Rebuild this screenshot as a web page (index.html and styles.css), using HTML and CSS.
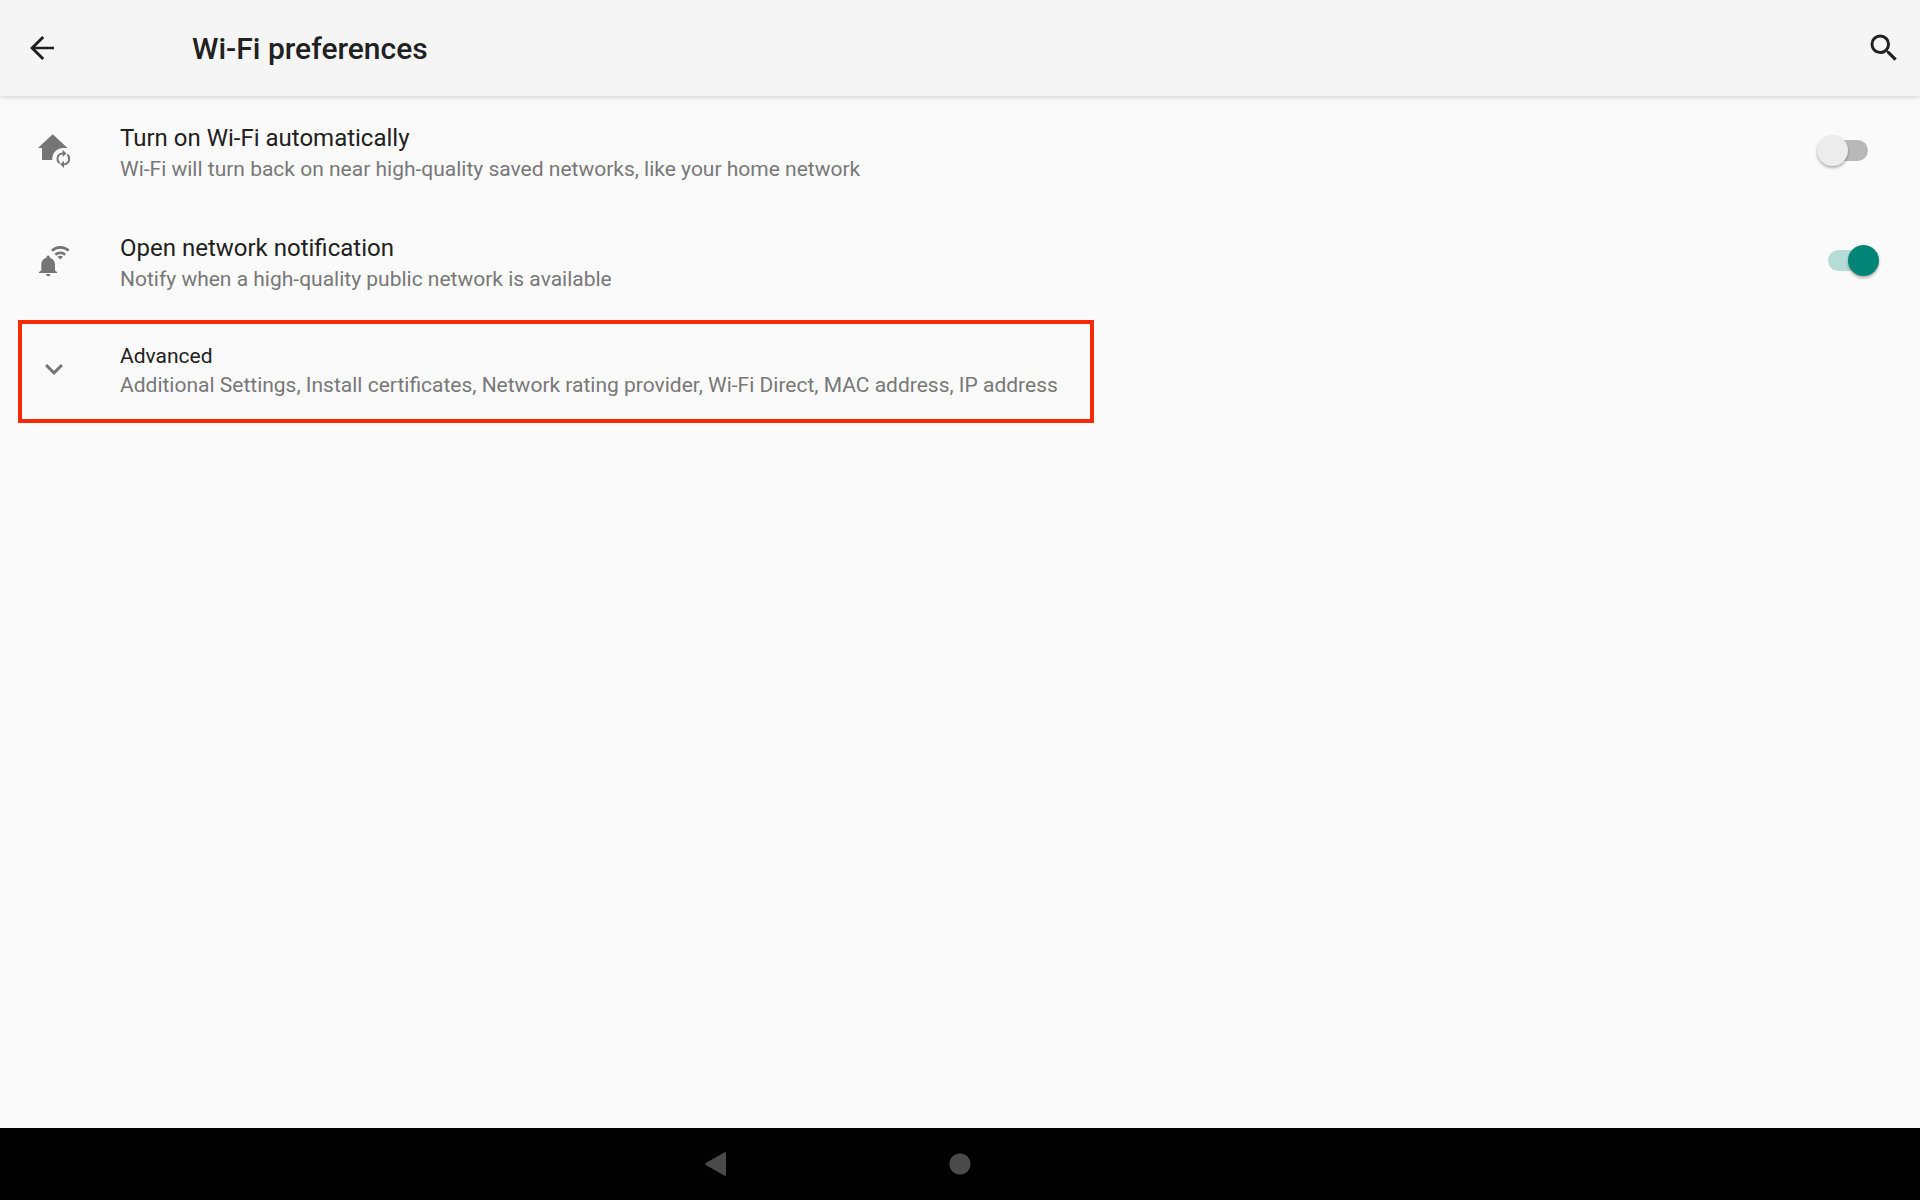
FILE: index.html
```html
<!DOCTYPE html>
<html lang="en">
<head>
    <meta charset="UTF-8">
    <meta name="viewport" content="width=device-width, initial-scale=1.0">
    <title>Wi-Fi preferences</title>
    <link rel="stylesheet" href="styles.css">
</head>
<body>
    <header class="app-bar">
        <button type="button" class="icon-button" aria-label="Navigate up">
            <svg class="icon" viewBox="0 0 24 24"><path d="M20 11.1H7.6l5.9-5.8L12.1 4 4 12l8.1 8 1.4-1.3-5.9-5.8H20z"/></svg>
        </button>
        <h1>Wi-Fi preferences</h1>
        <button type="button" class="icon-button" aria-label="Search">
            <svg class="icon" viewBox="0 0 24 24"><path d="M15.5 14h-.79l-.28-.27A6.47 6.47 0 0 0 16 9.5 6.5 6.5 0 1 0 9.5 16c1.61 0 3.09-.59 4.23-1.57l.27.28v.79l5 4.99L20.49 19l-4.99-5zm-6 0C7.01 14 5 11.99 5 9.5S7.01 5 9.5 5 14 7.01 14 9.5 11.99 14 9.5 14z"/></svg>
        </button>
    </header>

    <main class="preferences">
        <div class="preference">
            <svg class="icon" viewBox="0 0 36 36">
                <path d="M16.7 1.3 31.5 15H27.3A11 11 0 0 0 16.3 27H6V15H2z"/>
                <g class="stroke">
                    <path d="M23.6 30.2A5.5 5.5 0 0 1 26.2 20.4H28"/>
                    <path d="M31.1 21.5A5.5 5.5 0 0 1 28.5 31.3H27"/>
                </g>
                <path d="M26.6 16.8 30.4 20.4 26.6 24zM28 27.7 24.2 31.3 28 34.9z"/>
            </svg>
            <label class="text" for="autoWifi">
                <span class="title">Turn on Wi-Fi automatically</span>
                <span class="summary">Wi-Fi will turn back on near high-quality saved networks, like your home network</span>
            </label>
            <input type="checkbox" class="switch" id="autoWifi">
        </div>

        <div class="preference">
            <svg class="icon" viewBox="0 0 36 36">
                <path d="M10.4 14.2a1.7 1.7 0 0 1 3.4 0v.5c3.2.8 5.2 3.4 5.2 6.8v6l2 1.4V30H3v-1.1l2.3-1.4v-6c0-3.4 1.9-6 5.1-6.8zM10 31h4.4a2.2 2.2 0 0 1-4.4 0z"/>
                <g class="stroke wide">
                    <path d="M15.9 7.6a12.5 12.5 0 0 1 16.8 0"/>
                    <path d="M19.4 11.7a7.5 7.5 0 0 1 9.8 0"/>
                </g>
                <path d="M21.6 13.8a4.2 4.2 0 0 1 5.4 0L24.3 16.4z"/>
            </svg>
            <label class="text" for="openNetwork">
                <span class="title">Open network notification</span>
                <span class="summary">Notify when a high-quality public network is available</span>
            </label>
            <input type="checkbox" class="switch" id="openNetwork" checked>
        </div>

        <button type="button" class="advanced">
            <svg class="icon" viewBox="0 0 24 24"><path d="M16.59 8.59 12 13.17 7.41 8.59 6 10l6 6 6-6z"/></svg>
            <span class="text">
                <span class="title">Advanced</span>
                <span class="summary">Additional Settings, Install certificates, Network rating provider, Wi-Fi Direct, MAC address, IP address</span>
            </span>
        </button>
    </main>

    <nav class="nav-bar">
        <button type="button" aria-label="Back">
            <svg class="icon" viewBox="0 0 36 36"><path d="M22.6 6.2 3.8 17a1.2 1.2 0 0 0 0 2L22.6 29.8a.9.9 0 0 0 1.4-.8V7a.9.9 0 0 0-1.4-.8z"/></svg>
        </button>
        <button type="button" aria-label="Home">
            <svg class="icon" viewBox="0 0 36 36"><circle cx="18" cy="18" r="10.6"/></svg>
        </button>
    </nav>
</body>
</html>
```

FILE: styles.css
```css
* {
    box-sizing: border-box;
}
body {
    display: flex;
    flex-direction: column;
    min-height: 100vh;
    margin: 0;
    font-family: Roboto, sans-serif;
    background-color: #fafafa;
    color: #212121;
}
button {
    padding: 0;
    border: none;
    background: none;
    color: inherit;
    font: inherit;
    cursor: pointer;
}
.icon {
    display: block;
    flex: none;
    width: 36px;
    height: 36px;
    fill: currentColor;
}
.stroke {
    fill: none;
    stroke: currentColor;
    stroke-width: 1.8;
}
.wide {
    stroke-width: 2.6;
}

/* top bar */
.app-bar {
    display: flex;
    align-items: center;
    height: 96px;
    padding: 0 18px 0 24px;
    background-color: #f5f5f5;
    box-shadow: 0 1px 5px rgba(0, 0, 0, 0.18);
}
.app-bar h1 {
    flex: 1;
    margin: 0 0 0 132px;
    padding-top: 2px;
    font-size: 30px;
    font-weight: 500;
    line-height: 36px;
}

/* settings list */
.preferences {
    flex: 1;
}
.preference {
    display: flex;
    align-items: center;
    height: 110px;
    padding: 0 41px 0 36px;
}
.preference .icon,
.advanced .icon {
    color: #757575;
}
.text {
    flex: 1;
    margin-left: 48px;
}
.preference .text {
    padding-top: 4px;
}
.title,
.summary {
    display: block;
}
.title {
    font-size: 24px;
    line-height: 32px;
}
.summary {
    font-size: 21px;
    line-height: 30px;
    color: #787878;
}
.advanced {
    display: flex;
    align-items: flex-start;
    margin: 4px 18px;
    padding: 18px 32px 19px 14px;
    border: 4px solid #f62a07;
    text-align: left;
}
.advanced .icon {
    margin-top: 9px;
}
.advanced .title {
    font-size: 21px;
    line-height: 28px;
}

/* switches */
.switch {
    appearance: none;
    position: relative;
    width: 62px;
    height: 31px;
    margin: 0 0 2px;
    cursor: pointer;
}
.switch::before {
    content: "";
    position: absolute;
    top: 5px;
    left: 11px;
    width: 40px;
    height: 21px;
    border-radius: 11px;
    background-color: #b8b8b8;
}
.switch::after {
    content: "";
    position: absolute;
    top: 0;
    left: 0;
    width: 31px;
    height: 31px;
    border-radius: 50%;
    background-color: #ececec;
    box-shadow: 0 2px 3px rgba(0, 0, 0, 0.3);
}
.switch:checked::before {
    background-color: #b5dcd7;
}
.switch:checked::after {
    left: 31px;
    background-color: #008577;
}

/* system navigation */
.nav-bar {
    display: grid;
    grid-template-columns: repeat(3, 240px);
    justify-content: center;
    height: 72px;
    background-color: #000000;
    color: #4a4a4a;
}
.nav-bar button {
    display: flex;
    align-items: center;
    justify-content: center;
}
```
